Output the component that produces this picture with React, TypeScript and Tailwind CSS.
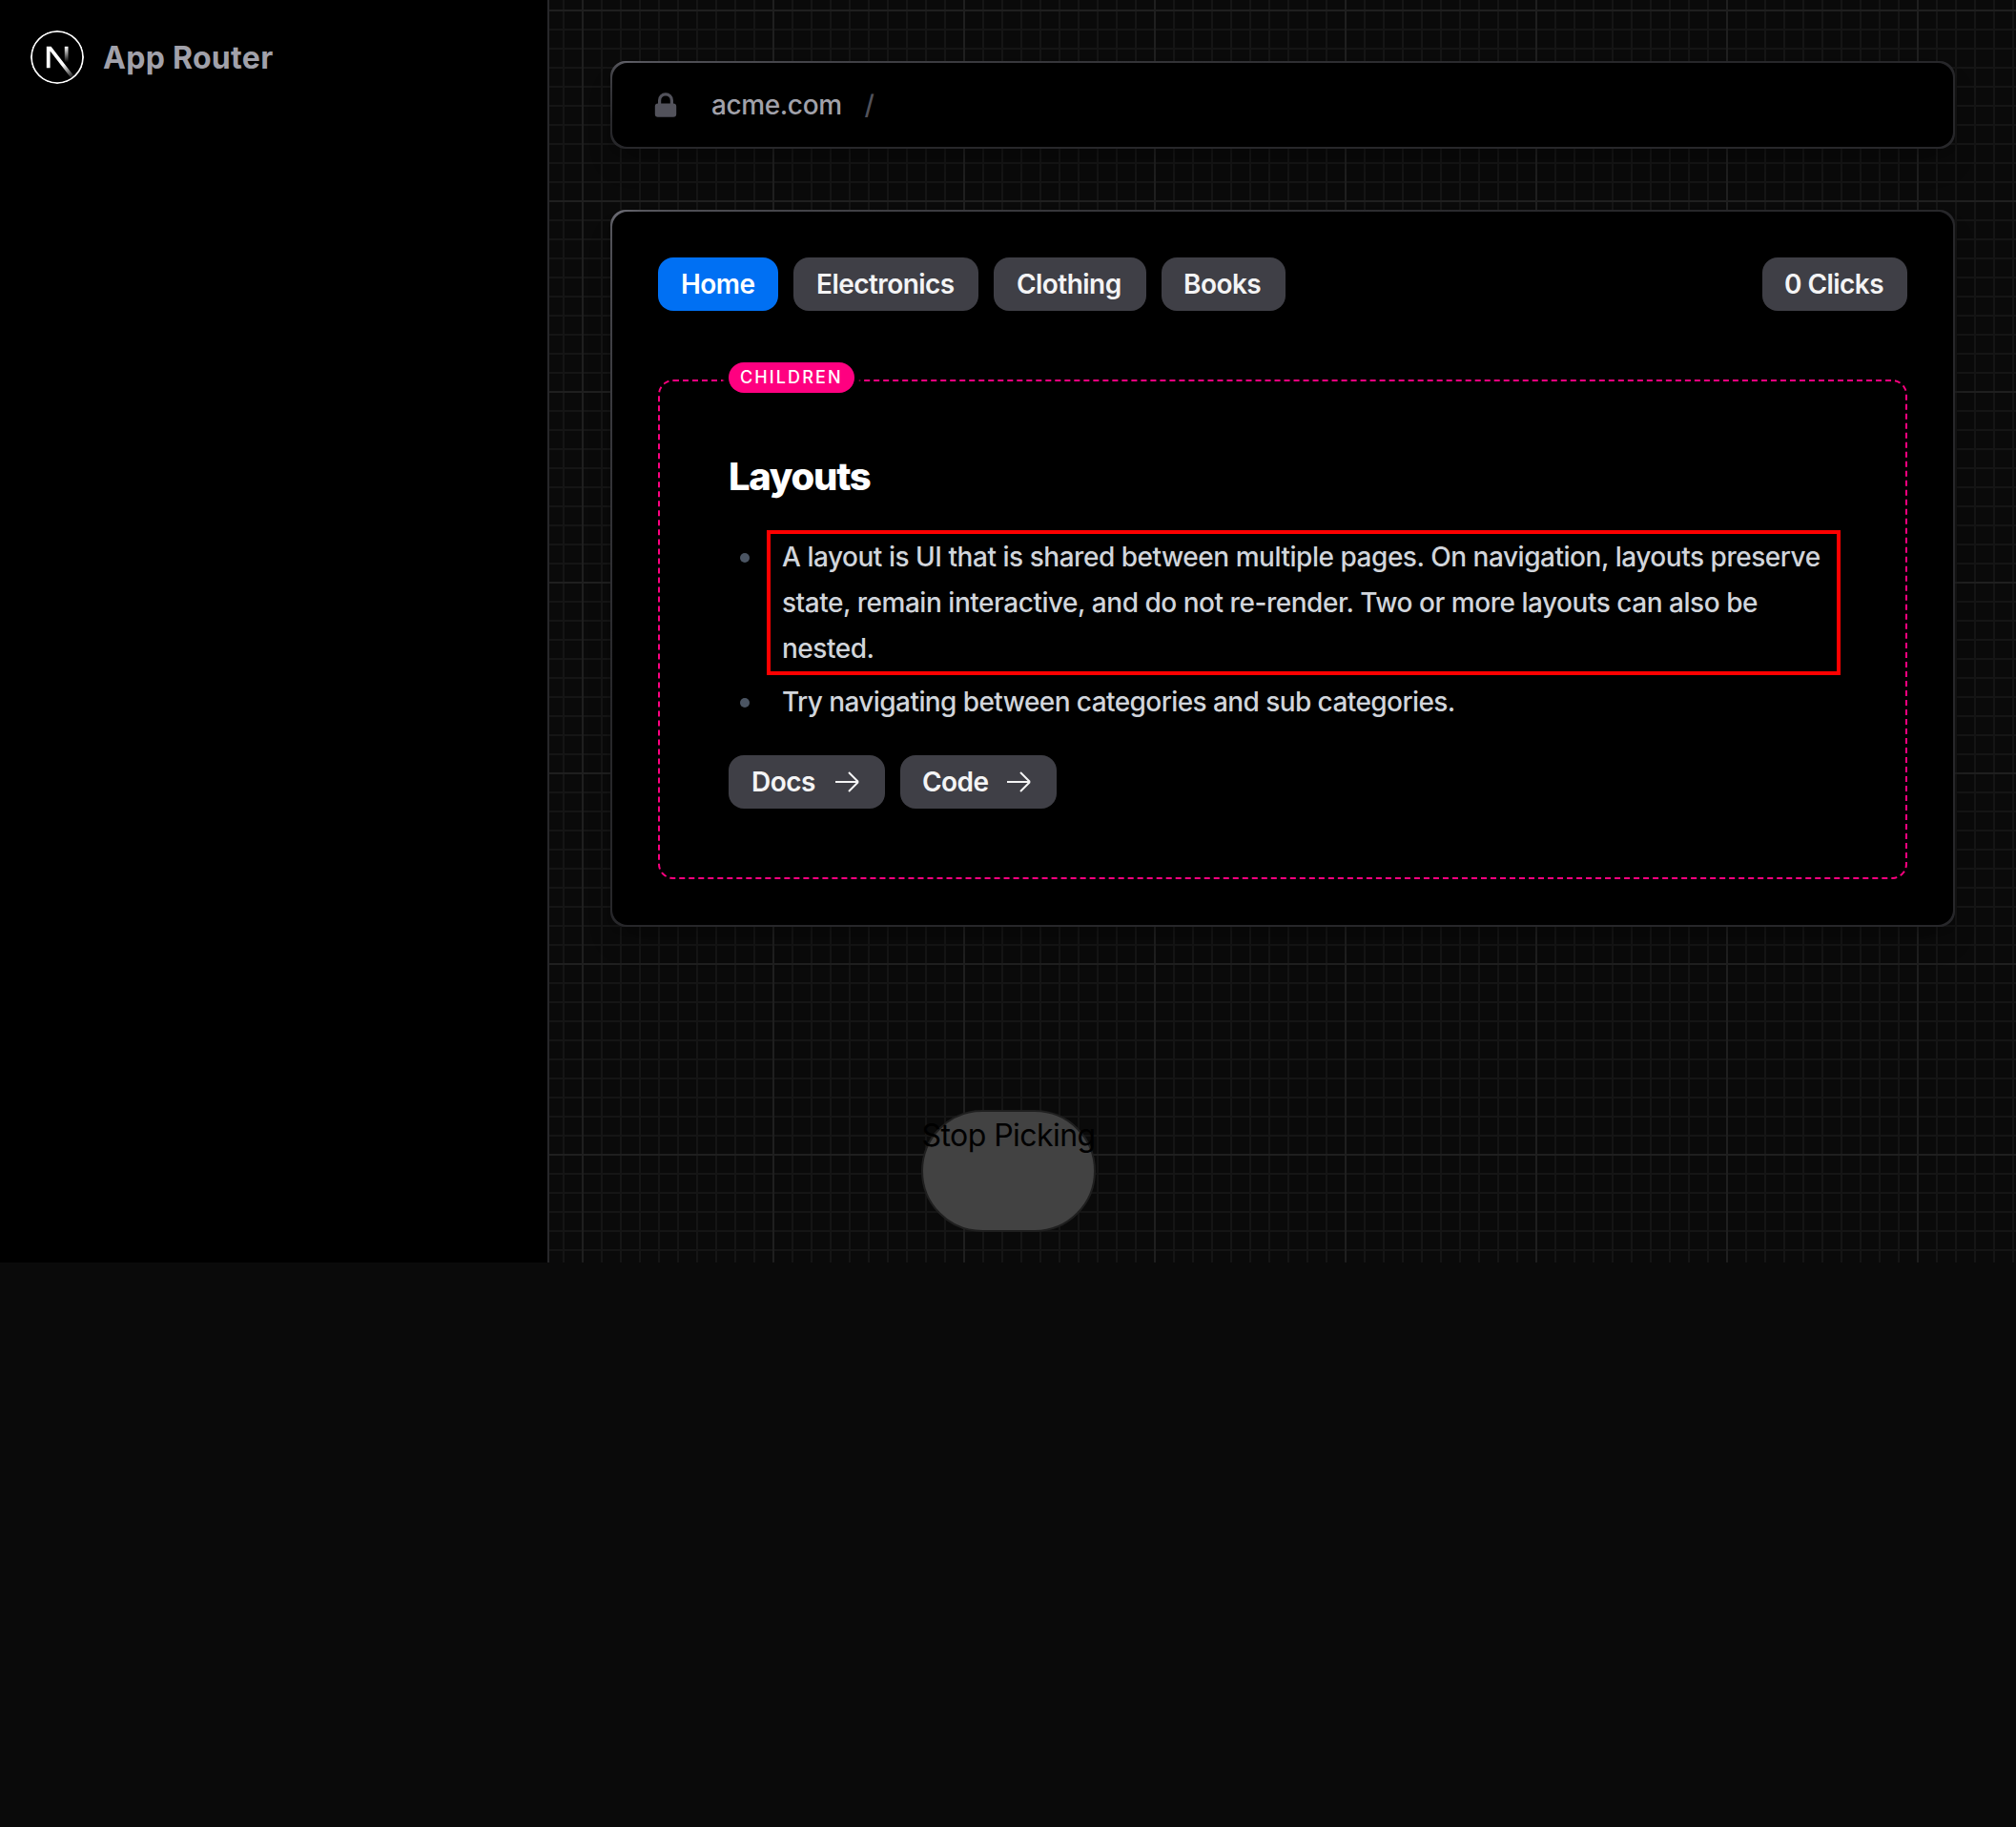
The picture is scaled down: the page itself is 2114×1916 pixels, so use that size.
import React from "react";

function NextLogo() {
  return (
    <svg className="size-14 shrink-0" viewBox="0 0 180 180" fill="none">
      <defs>
        <linearGradient id="diagonal" x1="109" y1="116.5" x2="144.5" y2="160.5" gradientUnits="userSpaceOnUse">
          <stop stopColor="white" />
          <stop offset="1" stopColor="white" stopOpacity="0" />
        </linearGradient>
        <linearGradient id="stem" x1="121" y1="54" x2="120.8" y2="106.9" gradientUnits="userSpaceOnUse">
          <stop stopColor="white" />
          <stop offset="1" stopColor="white" stopOpacity="0" />
        </linearGradient>
        <clipPath id="disc">
          <circle cx="90" cy="90" r="90" />
        </clipPath>
      </defs>
      <g clipPath="url(#disc)">
        <circle cx="90" cy="90" r="87" fill="black" stroke="white" strokeWidth="6" />
        <path
          d="M149.508 157.52L69.142 54H54V125.97H66.1136V69.3836L139.999 164.845C143.333 162.614 146.509 160.165 149.508 157.52Z"
          fill="url(#diagonal)"
        />
        <rect x="115" y="54" width="12" height="72" fill="url(#stem)" />
      </g>
    </svg>
  );
}

function LockIcon() {
  return (
    <svg className="size-8 text-[#52525b]" viewBox="0 0 20 20" fill="currentColor">
      <path
        fillRule="evenodd"
        clipRule="evenodd"
        d="M5 9V7a5 5 0 0110 0v2a2 2 0 012 2v5a2 2 0 01-2 2H5a2 2 0 01-2-2v-5a2 2 0 012-2zm8-2v2H7V7a3 3 0 016 0z"
      />
    </svg>
  );
}

function ArrowIcon() {
  return (
    <svg className="w-8 shrink-0" viewBox="0 0 24 24" fill="none" stroke="currentColor" strokeWidth="1.5">
      <path d="M13.5 4.5L21 12m0 0l-7.5 7.5M21 12H3" />
    </svg>
  );
}

function Card({ children }: { children: React.ReactNode }) {
  return (
    <div className="rounded-2xl bg-[radial-gradient(at_left_top,#71717a,100px,#27272a_50%)] p-[2px] shadow-[0_20px_30px_-6px_rgba(0,0,0,0.2),0_8px_12px_-8px_rgba(0,0,0,0.2)]">
      <div className="rounded-2xl bg-black">{children}</div>
    </div>
  );
}

function Pill({ children, className }: { children: React.ReactNode; className: string }) {
  return (
    <div
      className={`flex h-14 items-center rounded-2xl text-[28px] leading-10 font-semibold tracking-[-0.55px] whitespace-nowrap ${className}`}
    >
      {children}
    </div>
  );
}

const grid =
  "bg-[linear-gradient(to_right,#1f1f1f_2px,transparent_2px),linear-gradient(to_bottom,#1f1f1f_2px,transparent_2px),linear-gradient(to_right,#151515_2px,transparent_2px),linear-gradient(to_bottom,#151515_2px,transparent_2px)] bg-[length:200px_200px,200px_200px,20px_20px,20px_20px] bg-[position:34px_10px,34px_10px,14px_10px,14px_10px]";

export default function App() {
  return (
    <div className="h-[1916px] w-[2114px] overflow-hidden bg-[#0a0a0a] font-['Inter',sans-serif]">
      <div className="relative flex h-[1324px]">
        <aside className="w-[576px] shrink-0 border-r-2 border-[#27272a] bg-black">
          <div className="flex items-center gap-5 p-8">
            <NextLogo />
            <h3 className="pt-[2px] text-[32px] leading-[48px] font-bold tracking-[0.3px] text-[#a1a1aa]">
              App Router
            </h3>
          </div>
        </aside>

        <main className={`flex-1 space-y-16 p-16 ${grid}`}>
          <Card>
            <div className="flex items-center gap-4 px-10 py-6">
              <LockIcon />
              <div className="flex gap-2 text-[28px] leading-10 font-medium tracking-[-0.4px]">
                <span className="px-4 text-[#a1a1aa]">acme.com</span>
                <span className="text-[#52525b]">/</span>
              </div>
            </div>
          </Card>

          <Card>
            <div className="p-12">
              <div className="flex justify-between">
                <nav className="flex gap-4">
                  <Pill className="w-[126px] pl-6 bg-[#0070f3] text-white">Home</Pill>
                  <Pill className="w-[194px] pl-6 bg-[#3f3f46] text-[#f4f4f5]">Electronics</Pill>
                  <Pill className="w-[160px] pl-6 bg-[#3f3f46] text-[#f4f4f5]">Clothing</Pill>
                  <Pill className="w-[130px] pl-[23px] bg-[#3f3f46] text-[#f4f4f5]">Books</Pill>
                </nav>
                <Pill className="w-[152px] pl-[23px] bg-[#3f3f46] text-[#f4f4f5]">0 Clicks</Pill>
              </div>

              <section className="relative mt-[72px] rounded-2xl border-2 border-dashed border-[#ff0080] p-[72px]">
                <div className="absolute -top-5 w-[132px] rounded-full bg-[#ff0080] px-3 text-[18px] leading-8 font-medium tracking-[2.1px] text-white uppercase shadow-[0_0_2px_6px_black]">
                  children
                </div>
                <h1 className="text-[40px] leading-[56px] font-extrabold tracking-[-1.3px] text-white">Layouts</h1>
                <ul className="mt-8 space-y-2 text-[28px] leading-[48px] font-[450] text-[#d1d5db]">
                  <li className="flex">
                    <span className="mt-5 ml-3 size-[10px] shrink-0 rounded-full bg-[#4b5563]" />
                    <p className="ml-[22px] pl-3 tracking-[-0.47px] outline-4 outline-[#ff0000]">
                      A layout is UI that is shared between multiple pages. On navigation, layouts preserve state,
                      remain interactive, and do not re-render. Two or more layouts can also be nested.
                    </p>
                  </li>
                  <li className="flex">
                    <span className="mt-5 ml-3 size-[10px] shrink-0 rounded-full bg-[#4b5563]" />
                    <p className="ml-[22px] pl-3 tracking-[-0.58px]">
                      Try navigating between categories and sub categories.
                    </p>
                  </li>
                </ul>
                <div className="mt-8 flex gap-4">
                  <Pill className="w-[164px] justify-between bg-[#3f3f46] px-6 text-[#f4f4f5]">
                    Docs
                    <ArrowIcon />
                  </Pill>
                  <Pill className="w-[164px] justify-between bg-[#3f3f46] pr-6 pl-[23px] text-[#f4f4f5]">
                    Code
                    <ArrowIcon />
                  </Pill>
                </div>
              </section>
            </div>
          </Card>
        </main>

        <button className="absolute top-[1164px] left-[966px] flex h-[128px] w-[183px] justify-center rounded-[64px] border-2 border-[#1f1f1f] bg-[#424242] pt-px text-[32px] leading-[48px] tracking-[-0.55px] whitespace-nowrap text-black">
          Stop Picking
        </button>
      </div>
    </div>
  );
}
